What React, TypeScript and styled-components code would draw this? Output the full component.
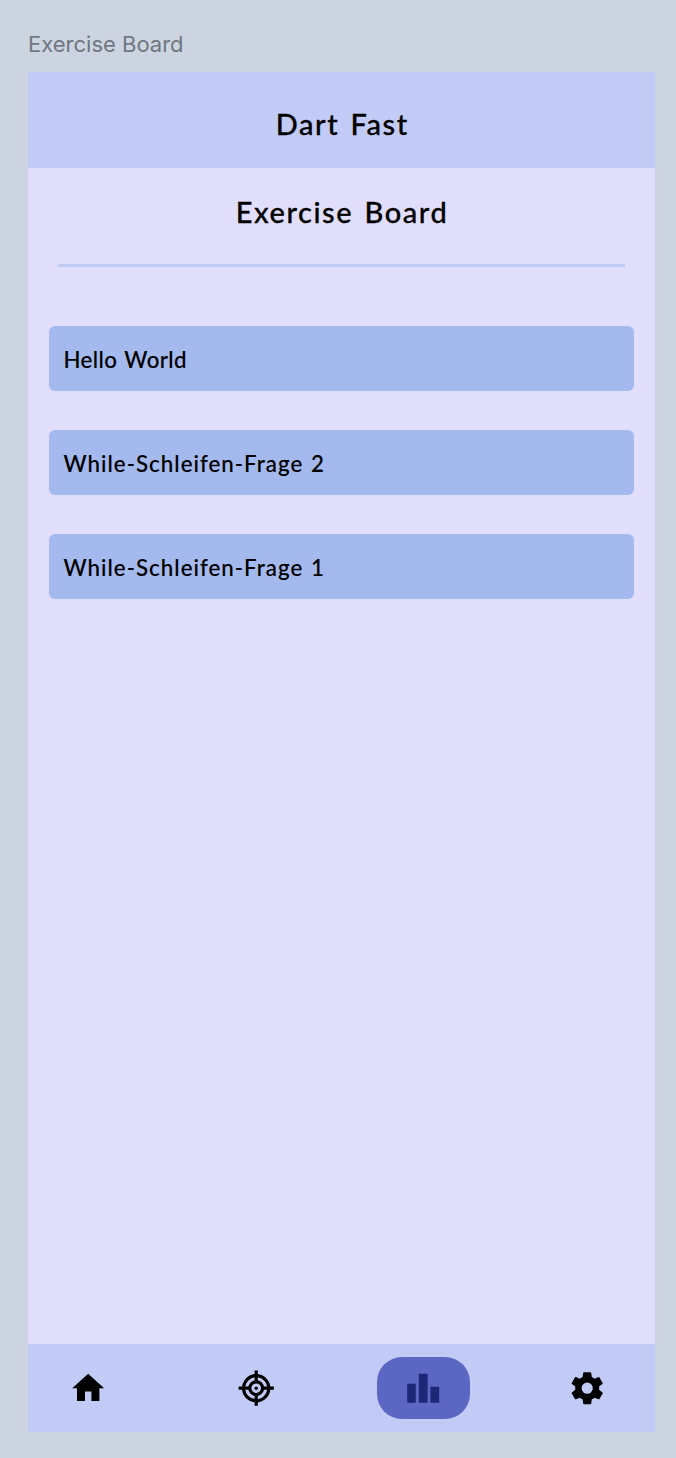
import React from "react";
import styled, { createGlobalStyle } from "styled-components";

const GlobalStyle = createGlobalStyle`
  *, *::before, *::after { box-sizing: border-box; }
  body { margin: 0; background: #ccd4e1; }
`;

const Canvas = styled.div`
  height: 1458px;
  padding: 30px 21px 26px 28px;
  background: #ccd4e1;
  display: flex;
  flex-direction: column;
`;

const FrameLabel = styled.div`
  height: 42px;
  line-height: 29px;
  font-family: Inter, sans-serif;
  font-size: 22px;
  color: #70777f;
  white-space: nowrap;
`;

const Phone = styled.div`
  flex: 1;
  display: flex;
  flex-direction: column;
  background: #e0defa;
  color: #000;
  font-family: Lato, sans-serif;
  font-weight: 500;
`;

const Header = styled.header`
  height: 96px;
  padding-top: 8px;
  display: flex;
  align-items: center;
  justify-content: center;
  background: #c2cbf5;
`;

const Title = styled.h1`
  margin: 0;
  font-size: 29px;
  line-height: 36px;
  font-weight: 500;
  letter-spacing: 1.55px;
  word-spacing: 2.5px;
  text-indent: 1.5px;
  white-space: nowrap;
  -webkit-text-stroke: 0.3px #000;
`;

const Main = styled.main`
  flex: 1;
  padding: 26px 21px 0 20.5px;
`;

const Heading = styled.div`
  height: 73px;
  margin: 0 9.5px;
  border-bottom: 3px solid #c0cbf4;
  text-align: center;
`;

const List = styled.div`
  padding-top: 59px;
  display: flex;
  flex-direction: column;
  gap: 38.4px;
`;

const Row = styled.div`
  height: 65.4px;
  padding: 3px 0 0 15px;
  display: flex;
  align-items: center;
  border-radius: 6px;
  background: #a4baee;
`;

const RowText = styled.span<{ $tracking: number }>`
  font-size: 22.3px;
  line-height: 28px;
  letter-spacing: ${(p) => p.$tracking}px;
  word-spacing: 1.2px;
  white-space: nowrap;
  -webkit-text-stroke: 0.15px #000;
`;

const Nav = styled.nav`
  height: 88px;
  padding-left: 13.5px;
  display: flex;
  align-items: center;
  background: #c2cbf5;
`;

const NavItem = styled.div<{ $active?: boolean; $gap?: number }>`
  flex: none;
  width: 93px;
  height: 62px;
  margin-right: ${(p) => p.$gap ?? 0}px;
  padding-top: 1px;
  display: flex;
  align-items: center;
  justify-content: center;
  border-radius: 25px;
  background: ${(p) => (p.$active ? "#5b67c3" : "transparent")};
  color: ${(p) => (p.$active ? "#1e2777" : "#000")};
`;

const Icon = styled.svg`
  width: 38.4px;
  height: 38.4px;
  display: block;
  fill: currentColor;
`;

const rows = [
  { label: "Hello World", tracking: 0.4 },
  { label: "While-Schleifen-Frage 2", tracking: 1.02 },
  { label: "While-Schleifen-Frage 1", tracking: 1.02 },
];

const HomeIcon = () => (
  <Icon viewBox="0 0 24 24">
    <path d="M10 20v-6h4v6h5v-8h3L12 3 2 12h3v8z" />
  </Icon>
);

const TargetIcon = () => (
  <Icon viewBox="-19.2 -19.2 38.4 38.4">
    <g fill="none" stroke="currentColor" strokeWidth="3.2">
      <circle r="12.6" />
      <circle r="6.4" />
      <path d="M0-17.6V-7M0 7v10.6M-17.6 0H-7M7 0h10.6" />
    </g>
    <circle r="1.7" />
  </Icon>
);

const ChartIcon = () => (
  <Icon viewBox="0 0 38.4 38.4">
    <path d="M3.2 14.7h8.6v19H3.2zM14.8 4.7h8.8v29h-8.8zM26.4 17.7h8.8v16h-8.8z" />
  </Icon>
);

const GearIcon = () => (
  <Icon viewBox="0 0 24 24">
    <path d="M12,15.5A3.5,3.5 0 0,1 8.5,12A3.5,3.5 0 0,1 12,8.5A3.5,3.5 0 0,1 15.5,12A3.5,3.5 0 0,1 12,15.5M19.43,12.97C19.47,12.65 19.5,12.33 19.5,12C19.5,11.67 19.47,11.34 19.43,11L21.54,9.37C21.73,9.22 21.78,8.95 21.66,8.73L19.66,5.27C19.54,5.05 19.27,4.96 19.05,5.05L16.56,6.05C16.04,5.66 15.5,5.32 14.87,5.07L14.5,2.42C14.46,2.18 14.25,2 14,2H10C9.75,2 9.54,2.18 9.5,2.42L9.13,5.07C8.5,5.32 7.96,5.66 7.44,6.05L4.95,5.05C4.73,4.96 4.46,5.05 4.34,5.27L2.34,8.73C2.21,8.95 2.27,9.22 2.46,9.37L4.57,11C4.53,11.34 4.5,11.67 4.5,12C4.5,12.33 4.53,12.65 4.57,12.97L2.46,14.63C2.27,14.78 2.21,15.05 2.34,15.27L4.34,18.73C4.46,18.95 4.73,19.03 4.95,18.95L7.44,17.94C7.96,18.34 8.5,18.68 9.13,18.93L9.5,21.58C9.54,21.82 9.75,22 10,22H14C14.25,22 14.46,21.82 14.5,21.58L14.87,18.93C15.5,18.67 16.04,18.34 16.56,17.94L19.05,18.95C19.27,19.03 19.54,18.95 19.66,18.73L21.66,15.27C21.78,15.05 21.73,14.78 21.54,14.63L19.43,12.97Z" />
  </Icon>
);

export default function App() {
  return (
    <>
      <GlobalStyle />
      <Canvas>
        <FrameLabel>Exercise Board</FrameLabel>
        <Phone>
          <Header>
            <Title>Dart Fast</Title>
          </Header>
          <Main>
            <Heading>
              <Title as="h2">Exercise Board</Title>
            </Heading>
            <List>
              {rows.map((row) => (
                <Row key={row.label}>
                  <RowText $tracking={row.tracking}>{row.label}</RowText>
                </Row>
              ))}
            </List>
          </Main>
          <Nav>
            <NavItem $gap={75}><HomeIcon /></NavItem>
            <NavItem $gap={74.5}><TargetIcon /></NavItem>
            <NavItem $active $gap={71.2}><ChartIcon /></NavItem>
            <NavItem><GearIcon /></NavItem>
          </Nav>
        </Phone>
      </Canvas>
    </>
  );
}
